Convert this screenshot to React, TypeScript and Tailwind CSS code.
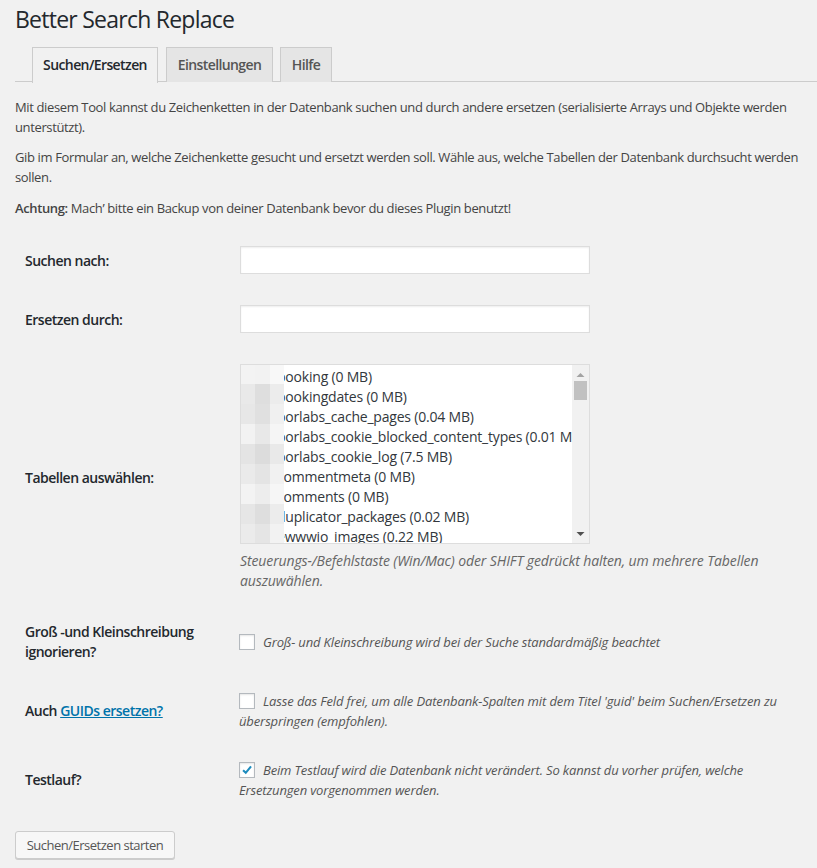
import React from "react";

const mosaic: string[][] = [
  ["#f3f3f3", "#f2f2f2", "#f8f8f8"],
  ["#e9e9e9", "#dedede", "#ececec"],
  ["#e7e7e7", "#e0e0e0", "#f0f0f0"],
  ["#f2f2f2", "#e8e8e8", "#f5f5f5"],
  ["#e4e4e4", "#dcdcdc", "#e9e9e9"],
  ["#eaeaea", "#e4e4e4", "#f1f1f1"],
  ["#f3f3f3", "#ededed", "#f6f6f6"],
  ["#e6e6e6", "#dedede", "#ececec"],
  ["#ebebeb", "#e5e5e5", "#f2f2f2"],
];

const tables = [
  "booking (0 MB)",
  "bookingdates (0 MB)",
  "borlabs_cache_pages (0.04 MB)",
  "borlabs_cookie_blocked_content_types (0.01 MB)",
  "borlabs_cookie_log (7.5 MB)",
  "commentmeta (0 MB)",
  "comments (0 MB)",
  "duplicator_packages (0.02 MB)",
  "ewwwio_images (0.22 MB)",
];

function Checkbox({ checked }: { checked?: boolean }) {
  return (
    <span className="inline-flex w-[16px] h-[16px] border border-[#b4b9be] bg-white shadow-[inset_0_1px_2px_rgba(0,0,0,0.1)] items-center justify-center align-[-3px] mr-[8px]">
      {checked && (
        <svg width="16" height="16" viewBox="0 0 16 16">
          <path d="M3.5 8.2 L6.6 11.2 L12.6 3.8" stroke="#1e8cbe" strokeWidth="2.4" fill="none" />
        </svg>
      )}
    </span>
  );
}

export default function App() {
  return (
    <div className="min-h-[868px] bg-[#f1f1f1] text-[#444] font-['Open_Sans',sans-serif] text-[13px] overflow-hidden">
      <div className="pl-[15px]">
        <h1 className="pt-[5px] text-[23px] leading-[29px] text-[#23282d] font-normal tracking-[-0.75px]">
          Better Search Replace
        </h1>
        <div className="mt-[13px] flex border-b border-[#ccc] pl-[17px] h-[35px]">
          <div className="w-[126px] h-[36px] border border-[#ccc] border-b-0 bg-[#f1f1f1] text-[#23282d] text-[14px] font-semibold leading-[34px] text-center tracking-[-0.6px] relative z-10">
            Suchen/Ersetzen
          </div>
          <div className="ml-[8px] w-[107px] h-[35px] border border-[#ccc] border-b-0 bg-[#e5e5e5] text-[#555] text-[14px] font-semibold leading-[34px] text-center tracking-[-0.6px]">
            Einstellungen
          </div>
          <div className="ml-[7px] w-[52px] h-[35px] border border-[#ccc] border-b-0 bg-[#e5e5e5] text-[#555] text-[14px] font-semibold leading-[34px] text-center tracking-[-0.6px]">
            Hilfe
          </div>
        </div>

        <div className="tracking-[-0.37px] leading-[20px] whitespace-nowrap">
          <p className="mt-[15px]">
            Mit diesem Tool kannst du Zeichenketten in der Datenbank suchen und durch andere ersetzen (serialisierte Arrays und Objekte werden
            <br />
            unterstützt).
          </p>
          <p className="mt-[10px]">
            Gib im Formular an, welche Zeichenkette gesucht und ersetzt werden soll. Wähle aus, welche Tabellen der Datenbank durchsucht werden
            <br />
            sollen.
          </p>
          <p className="mt-[11px]">
            <strong className="font-semibold">Achtung:</strong> Mach’ bitte ein Backup von deiner Datenbank bevor du dieses Plugin benutzt!
          </p>
        </div>

        {/* Row 1 */}
        <div className="mt-[28px] flex items-center">
          <div className="w-[225px] pl-[10px] text-[14px] font-semibold text-[#23282d] tracking-[-0.5px]">Suchen nach:</div>
          <div className="w-[350px] h-[28px] bg-white border border-[#ddd] shadow-[inset_0_1px_2px_rgba(0,0,0,0.07)]" />
        </div>

        {/* Row 2 */}
        <div className="mt-[31px] flex items-center">
          <div className="w-[225px] pl-[10px] text-[14px] font-semibold text-[#23282d] tracking-[-0.5px]">Ersetzen durch:</div>
          <div className="w-[350px] h-[28px] bg-white border border-[#ddd] shadow-[inset_0_1px_2px_rgba(0,0,0,0.07)]" />
        </div>

        {/* Row 3 */}
        <div className="mt-[31px] flex items-center">
          <div className="w-[225px] pl-[10px] text-[14px] font-semibold text-[#23282d] tracking-[-0.5px]">Tabellen auswählen:</div>
          <div>
            <div className="relative w-[350px] h-[180px] bg-white border border-[#ddd] overflow-hidden">
              <div className="pt-[2px] pl-[36px] text-[14px] leading-[20px] text-[#32373c] whitespace-nowrap tracking-[-0.2px]">
                {tables.map((t) => (
                  <div key={t}>{t}</div>
                ))}
              </div>
              <div className="absolute left-[-1px] top-[-1px] w-[44px] h-[180px] grid grid-cols-[15px_15px_14px] grid-rows-9">
                {mosaic.flat().map((c, i) => (
                  <div key={i} style={{ backgroundColor: c }} />
                ))}
              </div>
              <div className="absolute right-0 top-0 w-[17px] h-[178px] bg-[#f1f1f1] flex flex-col items-center">
                <svg width="9" height="6" viewBox="0 0 9 6" className="mt-[7px]">
                  <path d="M0.5 5 L4.5 1 L8.5 5 Z" fill="#a3a3a3" />
                </svg>
                <div className="mt-[3px] w-[13px] h-[19px] bg-[#c1c1c1]" />
                <div className="flex-1" />
                <svg width="9" height="6" viewBox="0 0 9 6" className="mb-[6px]">
                  <path d="M0.5 1 L4.5 5 L8.5 1 Z" fill="#505050" />
                </svg>
              </div>
            </div>
            <p className="mt-[7px] italic text-[14px] text-[#666] leading-[20px] whitespace-nowrap tracking-[-0.11px]">
              Steuerungs-/Befehlstaste (Win/Mac) oder SHIFT gedrückt halten, um mehrere Tabellen
              <br />
              auszuwählen.
            </p>
          </div>
        </div>

        {/* Row 4 */}
        <div className="mt-[31px] flex items-center">
          <div className="w-[225px] pl-[10px] text-[14px] leading-[20px] font-semibold text-[#23282d] tracking-[-0.5px]">
            Groß -und Kleinschreibung
            <br />
            ignorieren?
          </div>
          <div className="italic text-[#555] leading-[20px] whitespace-nowrap tracking-[-0.15px] -ml-[1px]">
            <Checkbox />
            Groß- und Kleinschreibung wird bei der Suche standardmäßig beachtet
          </div>
        </div>

        {/* Row 5 */}
        <div className="mt-[29px] flex items-center">
          <div className="w-[225px] pl-[10px] text-[14px] leading-[20px] font-semibold text-[#23282d] tracking-[-0.5px]">
            Auch <a className="text-[#0073aa] underline">GUIDs ersetzen?</a>
          </div>
          <div className="italic text-[#555] leading-[20px] whitespace-nowrap tracking-[-0.12px] -ml-[1px]">
            <Checkbox />
            Lasse das Feld frei, um alle Datenbank-Spalten mit dem Titel 'guid' beim Suchen/Ersetzen zu
            <br />
            überspringen (empfohlen).
          </div>
        </div>

        {/* Row 6 */}
        <div className="mt-[29px] flex items-center">
          <div className="w-[225px] pl-[10px] text-[14px] leading-[20px] font-semibold text-[#23282d] tracking-[-0.5px]">
            Testlauf?
          </div>
          <div className="italic text-[#555] leading-[20px] whitespace-nowrap tracking-[-0.15px] -ml-[1px]">
            <Checkbox checked />
            Beim Testlauf wird die Datenbank nicht verändert. So kannst du vorher prüfen, welche
            <br />
            Ersetzungen vorgenommen werden.
          </div>
        </div>

        <div className="mt-[31px]">
          <div className="w-[160px] h-[28px] bg-[#f7f7f7] border border-[#ccc] rounded-[3px] shadow-[0_1px_0_#ccc] text-[#555] text-[13px] leading-[26px] text-center tracking-[-0.5px]">
            Suchen/Ersetzen starten
          </div>
        </div>
      </div>
    </div>
  );
}
